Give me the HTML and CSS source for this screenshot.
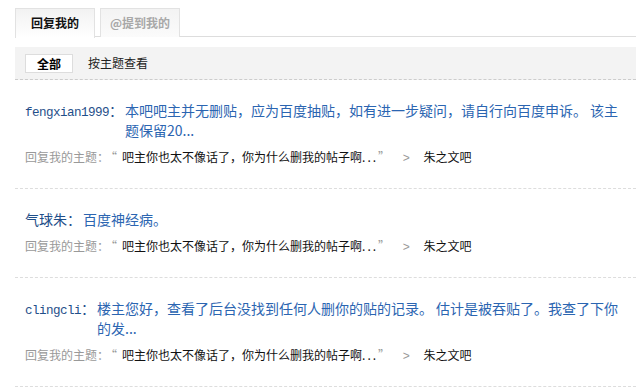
FILE: index.html
```html
<!DOCTYPE html>
<html lang="zh-CN">
<head>
  <meta charset="UTF-8">
  <title>回复我的</title>
  <link rel="stylesheet" href="styles.css">
</head>
<body>
  <div class="wrap">
    <ul class="tabs">
      <li class="tab active">回复我的</li>
      <li class="tab">@提到我的</li>
    </ul>

    <div class="filter">
      <span class="filter-btn active">全部</span>
      <span class="filter-btn">按主题查看</span>
    </div>

    <ul class="feed">
      <li class="item">
        <div class="reply">
          <span class="user"><span class="mono">fengxian1999</span>：</span>
          <span class="content">本吧吧主并无删贴，应为百度抽贴，如有进一步疑问，请自行向百度申诉。 该主题保留20...</span>
        </div>
        <div class="topic">
          <span class="label">回复我的主题：</span><span class="quote open">“</span><span class="title">吧主你也太不像话了，你为什么删我的帖子啊<span class="dots">...</span></span><span class="quote">”</span>
          <span class="arrow">&gt;</span>
          <span class="forum">朱之文吧</span>
        </div>
      </li>
      <li class="item">
        <div class="reply">
          <span class="user">气球朱：</span>
          <span class="content">百度神经病。</span>
        </div>
        <div class="topic">
          <span class="label">回复我的主题：</span><span class="quote open">“</span><span class="title">吧主你也太不像话了，你为什么删我的帖子啊<span class="dots">...</span></span><span class="quote">”</span>
          <span class="arrow">&gt;</span>
          <span class="forum">朱之文吧</span>
        </div>
      </li>
      <li class="item">
        <div class="reply">
          <span class="user"><span class="mono">clingcli</span>：</span>
          <span class="content">楼主您好，查看了后台没找到任何人删你的贴的记录。 估计是被吞贴了。我查了下你的发...</span>
        </div>
        <div class="topic">
          <span class="label">回复我的主题：</span><span class="quote open">“</span><span class="title">吧主你也太不像话了，你为什么删我的帖子啊<span class="dots">...</span></span><span class="quote">”</span>
          <span class="arrow">&gt;</span>
          <span class="forum">朱之文吧</span>
        </div>
      </li>
    </ul>
  </div>
</body>
</html>
```

FILE: styles.css
```css
* { box-sizing: border-box; }
body {
  margin: 0;
  font-family: "Noto Sans CJK SC", sans-serif;
  font-size: 12px;
  color: #222;
  background: #fff;
  overflow: hidden;
}
ul {
  list-style: none;
  margin: 0;
  padding: 0;
}
.wrap {
  margin-left: 15px;
  padding-top: 8px;
}
.tabs {
  display: flex;
  gap: 5px;
  height: 29px;
  border-bottom: 1px solid #ddd;
}
.tab {
  width: 80px;
  height: 29px;
  border: 1px solid #e2e2e2;
  border-bottom: none;
  background: linear-gradient(#f3f3f3, #fbfbfb);
  font-weight: bold;
  color: #a8a8a8;
  text-align: center;
  line-height: 28px;
}
.tab.active {
  height: 30px;
  color: #111;
  background: linear-gradient(#f2f2f2, #fff);
}
.filter {
  display: flex;
  align-items: center;
  gap: 15px;
  margin-top: 10px;
  padding: 7px 10px 6px;
  background: #f3f3f3;
  border-bottom: 1px dashed #ccc;
}
.filter-btn {
  height: 19px;
  line-height: 17px;
}
.filter-btn.active {
  padding: 0 11px;
  background: #fff;
  border: 1px solid #ddd;
  font-weight: bold;
  color: #000;
}
.item {
  padding: 20px 4px 20px 10px;
  border-bottom: 1px dashed #ddd;
}
.reply {
  display: flex;
  font-size: 14px;
  line-height: 20px;
}
.user {
  flex: none;
  margin-right: 2px;
  color: #1f4f8a;
}
.mono {
  font-family: "Liberation Mono", monospace;
  font-size: 12.6px;
  letter-spacing: -0.56px;
}
.content {
  flex: 1;
  color: #2b65b1;
}
.topic {
  margin-top: 7px;
  line-height: 20px;
  white-space: nowrap;
}
.label,
.quote,
.arrow {
  color: #999;
}
.quote.open {
  margin: 0 5px 0 2px;
}
.dots {
  letter-spacing: 2px;
}
.arrow {
  margin: 0 11px 0 10px;
  font-family: "Liberation Sans", sans-serif;
}
.title,
.forum {
  color: #111;
}
```
